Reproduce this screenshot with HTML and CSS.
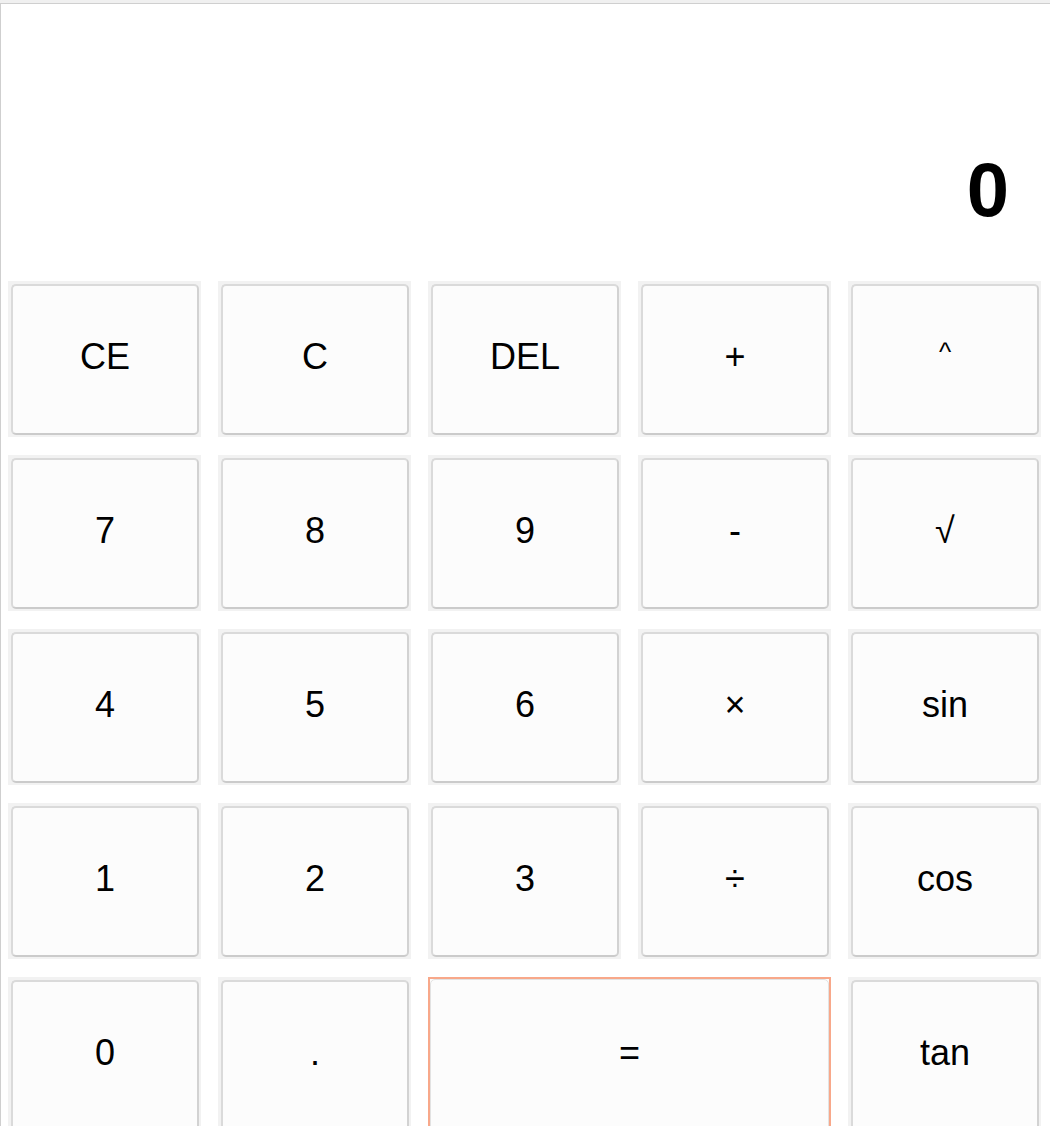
FILE: index.html
```html
<!DOCTYPE html>
<html lang="en">
<head>
<meta charset="utf-8">
<title>Calculator</title>
<link rel="stylesheet" href="styles.css">
</head>
<body>
<div class="topbar"></div>
<div class="calc">
  <div class="display"><span class="value">0</span></div>
  <div class="keypad">
    <div class="cell"><button class="key">CE</button></div>
    <div class="cell"><button class="key">C</button></div>
    <div class="cell"><button class="key">DEL</button></div>
    <div class="cell"><button class="key">+</button></div>
    <div class="cell"><button class="key key-small">^</button></div>

    <div class="cell"><button class="key">7</button></div>
    <div class="cell"><button class="key">8</button></div>
    <div class="cell"><button class="key">9</button></div>
    <div class="cell"><button class="key">-</button></div>
    <div class="cell"><button class="key">√</button></div>

    <div class="cell"><button class="key">4</button></div>
    <div class="cell"><button class="key">5</button></div>
    <div class="cell"><button class="key">6</button></div>
    <div class="cell"><button class="key">×</button></div>
    <div class="cell"><button class="key">sin</button></div>

    <div class="cell"><button class="key">1</button></div>
    <div class="cell"><button class="key">2</button></div>
    <div class="cell"><button class="key">3</button></div>
    <div class="cell"><button class="key">÷</button></div>
    <div class="cell"><button class="key">cos</button></div>

    <div class="cell"><button class="key">0</button></div>
    <div class="cell"><button class="key">.</button></div>
    <div class="cell cell-eq"><button class="key key-eq">=</button></div>
    <div class="cell"><button class="key">tan</button></div>
  </div>
</div>
</body>
</html>
```

FILE: styles.css
```css
html, body {
  margin: 0;
  padding: 0;
  overflow: hidden;
  background: #ffffff;
  font-family: "Liberation Sans", Arial, sans-serif;
}

.topbar {
  height: 3px;
  background: #f0f0f0;
}

.calc {
  border-top: 1px solid #cfcfcf;
  border-left: 1px solid #cfcfcf;
}

.display {
  height: 224px;
  padding-right: 41px;
  display: flex;
  align-items: flex-end;
  justify-content: flex-end;
}

.value {
  font-size: 76px;
  font-weight: bold;
  line-height: 1;
  color: #000;
}

.keypad {
  display: grid;
  grid-template-columns: repeat(5, 193px);
  grid-auto-rows: 156px;
  column-gap: 17px;
  row-gap: 18px;
  padding: 53px 0 0 7px;
}

.cell {
  box-sizing: border-box;
  background: #f2f2f2;
  padding: 3px 2px 2px 3px;
  display: flex;
}

.key {
  flex: 1;
  margin: 0;
  box-sizing: border-box;
  background: #fcfcfc;
  border: 2px solid #dadada;
  border-bottom-color: #cbcbcb;
  border-right-color: #d2d2d2;
  border-radius: 5px;
  font-family: "Liberation Sans", Arial, sans-serif;
  font-size: 36px;
  color: #000;
  padding: 0 0 5px 0;
}

.key-small {
  font-size: 26px;
  padding-bottom: 14px;
}

.cell-eq {
  grid-column: span 2;
  background: #fcfcfc;
  border: 2px solid #f8a88a;
  padding: 0;
}

.key-eq {
  border: 1px solid #e2e2e2;
  padding-bottom: 4px;
}
```
